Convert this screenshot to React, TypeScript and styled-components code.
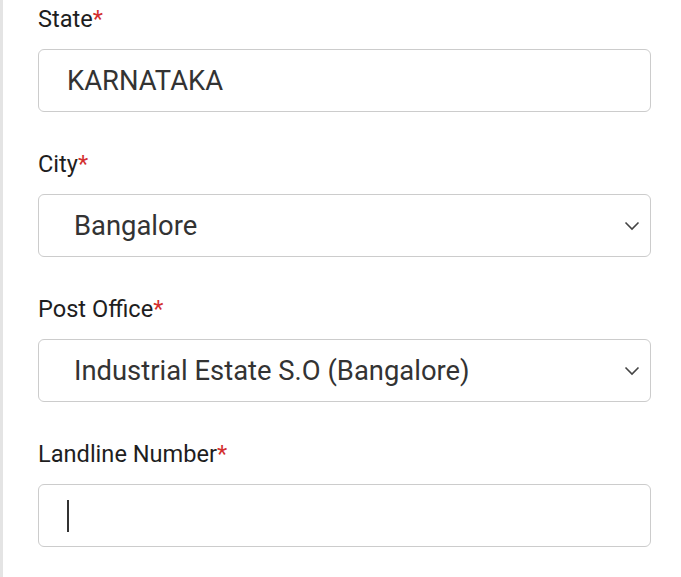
import React from "react";
import styled, { createGlobalStyle } from "styled-components";

const GlobalStyle = createGlobalStyle`
  html, body {
    margin: 0;
    padding: 0;
    background: #fff;
  }
  body {
    font-family: Roboto, "Noto Sans", "Liberation Sans", sans-serif;
  }
`;

const fields = [
  { label: "State", kind: "input", value: "KARNATAKA" },
  { label: "City", kind: "select", value: "Bangalore" },
  { label: "Post Office", kind: "select", value: "Industrial Estate S.O (Bangalore)" },
  { label: "Landline Number", kind: "focused", value: "" },
];

const App: React.FC = () => {
  return (
    <>
      <GlobalStyle />
      <Page>
        {fields.map((f) => (
          <Group key={f.label}>
            <Label>
              {f.label}
              <Required>*</Required>
            </Label>
            {f.kind === "select" ? (
              <FieldBox $pad={35}>
                <Select value={f.value} onChange={() => {}}>
                  <option value={f.value}>{f.value}</option>
                </Select>
                <Chevron width="16" height="10" viewBox="0 0 16 10">
                  <path d="M1.5 1.5 L8 8 L14.5 1.5" fill="none" stroke="#444" strokeWidth="1.6" />
                </Chevron>
              </FieldBox>
            ) : (
              <FieldBox $pad={28}>
                {f.kind === "focused" && <Caret />}
                <TextInput value={f.value} readOnly />
              </FieldBox>
            )}
          </Group>
        ))}
      </Page>
    </>
  );
};

export default App;

const Page = styled.div`
  min-height: 577px;
  box-sizing: border-box;
  border-left: 3px solid #e4e4e4;
  padding: 5px 30px 0 35px;
  display: flex;
  flex-direction: column;
  gap: 38px;
`;

const Group = styled.div`
  display: flex;
  flex-direction: column;
  gap: 16px;
`;

const Label = styled.label`
  font-size: 23.6px;
  line-height: 28px;
  color: #1e1e1e;
`;

const Required = styled.span`
  color: #d32f2f;
`;

const FieldBox = styled.div<{ $pad: number }>`
  height: 63px;
  box-sizing: border-box;
  border: 1px solid #cccccc;
  border-radius: 6px;
  display: flex;
  align-items: center;
  padding: 0 10px 0 ${(p) => p.$pad}px;
  background: #fff;
`;

const TextInput = styled.input`
  flex: 1;
  min-width: 0;
  border: none;
  outline: none;
  background: transparent;
  font-family: inherit;
  font-size: 27.4px;
  color: #333;
  padding: 0;
`;

const Select = styled.select`
  flex: 1;
  min-width: 0;
  appearance: none;
  border: none;
  outline: none;
  background: transparent;
  font-family: inherit;
  font-size: 27.4px;
  color: #333;
  padding: 0;
`;

const Chevron = styled.svg`
  flex-shrink: 0;
`;

const Caret = styled.span`
  width: 2px;
  height: 32px;
  background: #333;
  margin-right: 2px;
`;
